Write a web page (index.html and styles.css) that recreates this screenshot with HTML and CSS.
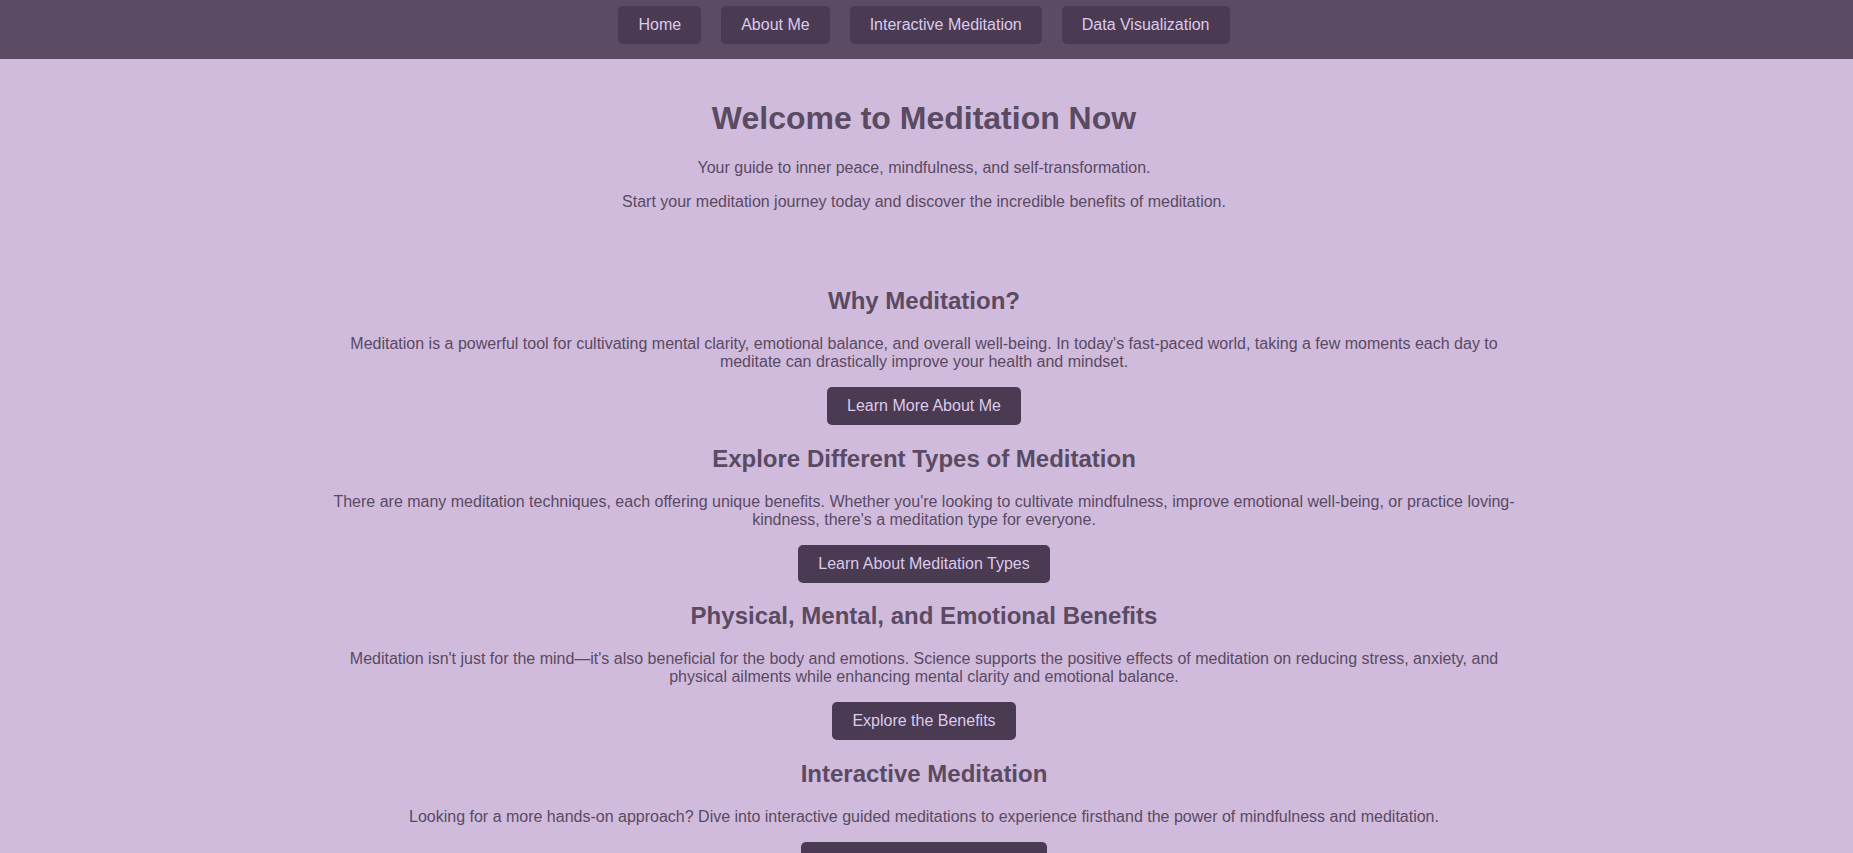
FILE: index.html
```html
<!DOCTYPE html>
<html lang="en">
<head>
<meta charset="UTF-8">
<title>Meditation Now</title>
<link rel="stylesheet" href="styles.css">
</head>
<body>
<nav class="site-nav">
  <div class="nav-links">
    <a class="nav-link" href="#">Home</a>
    <a class="nav-link" href="#">About Me</a>
    <a class="nav-link" href="#">Interactive Meditation</a>
    <a class="nav-link" href="#">Data Visualization</a>
  </div>
</nav>
<div class="page">
  <header class="hero">
    <h1 class="hero-title">Welcome to Meditation Now</h1>
    <p class="hero-text">Your guide to inner peace, mindfulness, and self-transformation.</p>
    <p class="hero-text">Start your meditation journey today and discover the incredible benefits of meditation.</p>
  </header>
  <main class="content">
    <section class="topic">
      <h2 class="topic-title">Why Meditation?</h2>
      <p class="topic-text">Meditation is a powerful tool for cultivating mental clarity, emotional balance, and overall well-being. In today's fast-paced world, taking a few moments each day to meditate can drastically improve your health and mindset.</p>
      <div class="actions"><a class="btn" href="#">Learn More About Me</a></div>
    </section>
    <section class="topic">
      <h2 class="topic-title">Explore Different Types of Meditation</h2>
      <p class="topic-text">There are many meditation techniques, each offering unique benefits. Whether you're looking to cultivate mindfulness, improve emotional well-being, or practice loving-kindness, there's a meditation type for everyone.</p>
      <div class="actions"><a class="btn" href="#">Learn About Meditation Types</a></div>
    </section>
    <section class="topic">
      <h2 class="topic-title">Physical, Mental, and Emotional Benefits</h2>
      <p class="topic-text">Meditation isn't just for the mind—it's also beneficial for the body and emotions. Science supports the positive effects of meditation on reducing stress, anxiety, and physical ailments while enhancing mental clarity and emotional balance.</p>
      <div class="actions"><a class="btn" href="#">Explore the Benefits</a></div>
    </section>
    <section class="topic">
      <h2 class="topic-title">Interactive Meditation</h2>
      <p class="topic-text">Looking for a more hands-on approach? Dive into interactive guided meditations to experience firsthand the power of mindfulness and meditation.</p>
      <div class="actions"><a class="btn" href="#">Try the Interactive Meditation</a></div>
    </section>
  </main>
</div>
</body>
</html>
```
FILE: styles.css
```css
html, body {
  margin: 0;
  padding: 0;
}

body {
  background: #d0bbdd;
  color: #5a4a62;
  font-family: "Liberation Sans", Arial, sans-serif;
  font-size: 16px;
}

.site-nav {
  background: #5b4b63;
  padding: 6px 5px 15px 0;
}

.nav-links {
  display: flex;
  justify-content: center;
  gap: 20px;
}

.nav-link {
  display: block;
  padding: 10px 20px;
  background: #4a3a52;
  color: #dccaec;
  text-decoration: none;
  border-radius: 5px;
  line-height: 18px;
}

.page {
  padding-right: 5px;
}

.hero {
  padding: 20px;
  text-align: center;
}

.hero-title {
  font-size: 32px;
  margin: 21.44px 0;
  color: #5a4a62;
}

.hero-text {
  margin: 16px 0;
}

.content {
  max-width: 1200px;
  margin: 0 auto;
  padding: 20px;
  text-align: center;
}

.topic-title {
  font-size: 24px;
  margin: 19.92px 0;
  color: #5a4a62;
}

.topic-text {
  margin: 16px 0;
}

.actions {
  display: flex;
  justify-content: center;
}

.btn {
  display: block;
  padding: 10px 20px;
  background: #4a3a52;
  color: #dccaec;
  text-decoration: none;
  border-radius: 5px;
  line-height: 18px;
}
```
